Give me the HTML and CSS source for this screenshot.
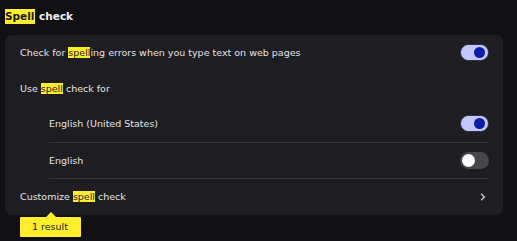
FILE: index.html
```html
<!DOCTYPE html>
<html>
<head>
<meta charset="utf-8">
<link rel="stylesheet" href="styles.css">
</head>
<body>
<div class="page">
  <h2 class="title"><span class="hit big">Spell</span> check</h2>
  <div class="card">
    <div class="row">
      <span class="label">Check for <span class="hit">spell</span>ing errors when you type text on web pages</span>
      <span class="toggle on"><span class="knob"></span></span>
    </div>
    <div class="row">
      <span class="label">Use <span class="hit">spell</span> check for</span>
    </div>
    <div class="sub">
      <div class="row">
        <span class="label">English (United States)</span>
        <span class="toggle on"><span class="knob"></span></span>
      </div>
      <div class="row">
        <span class="label">English</span>
        <span class="toggle off"><span class="knob"></span></span>
      </div>
    </div>
    <div class="row">
      <span class="label">Customize <span class="hit">spell</span> check</span>
      <svg class="chev" width="6" height="8" viewBox="0 0 6 8"><polyline points="1.2,0.8 4.4,4 1.2,7.2" fill="none" stroke="#c8c8cc" stroke-width="1.4"/></svg>
    </div>
  </div>
  <div class="bubble">1 result</div>
</div>
</body>
</html>
```

FILE: styles.css
```css
html, body {
  margin: 0;
  background: #111113;
  min-height: 241px;
}
body {
  font-family: "DejaVu Sans", sans-serif;
  color: #e3e3e6;
}
.page {
  padding: 9px 0 10px 5px;
}
.title {
  margin: 0 0 11px;
  font-size: 10.5px;
  font-weight: bold;
  line-height: 15px;
  height: 15px;
  color: #f0f0f2;
}
.hit {
  background: #ffee2e;
  color: #1a1a1a;
}
.hit.big {
  display: inline-block;
  line-height: 15px;
  padding: 0 1px 0 0;
}
.card {
  width: 498px;
  box-sizing: border-box;
  background: #1e1e22;
  border-radius: 7px;
  padding: 0 14px 0 15px;
}
.row {
  height: 35.5px;
  display: flex;
  align-items: center;
  justify-content: space-between;
  font-size: 9.5px;
}
.sub {
  margin-left: 29px;
  border-bottom: 1px solid #38383c;
}
.sub .row + .row {
  border-top: 1px solid #38383c;
}
.toggle {
  width: 29px;
  height: 17px;
  box-sizing: border-box;
  border-radius: 9px;
  display: flex;
  align-items: center;
}
.toggle.on {
  background: #c3c6ff;
  border: 1px solid #303044;
  justify-content: flex-end;
  padding-right: 3px;
}
.toggle.on .knob {
  width: 11px;
  height: 11px;
  border-radius: 50%;
  background: #0c1ca8;
}
.toggle.off {
  background: #47474b;
  justify-content: flex-start;
  padding-left: 2px;
}
.toggle.off .knob {
  width: 13px;
  height: 13px;
  border-radius: 50%;
  background: #ffffff;
}
.chev {
  margin-right: 3px;
}
.bubble {
  position: relative;
  display: inline-block;
  margin: 1px 0 0 15px;
  height: 20px;
  line-height: 20px;
  padding: 0 13px 0 12px;
  background: #ffee2e;
  color: #222;
  font-size: 9.5px;
  border-radius: 1px;
}
.bubble::before {
  content: "";
  position: absolute;
  left: 26px;
  top: -5px;
  border-left: 5px solid transparent;
  border-right: 5px solid transparent;
  border-bottom: 5px solid #ffee2e;
}
```
